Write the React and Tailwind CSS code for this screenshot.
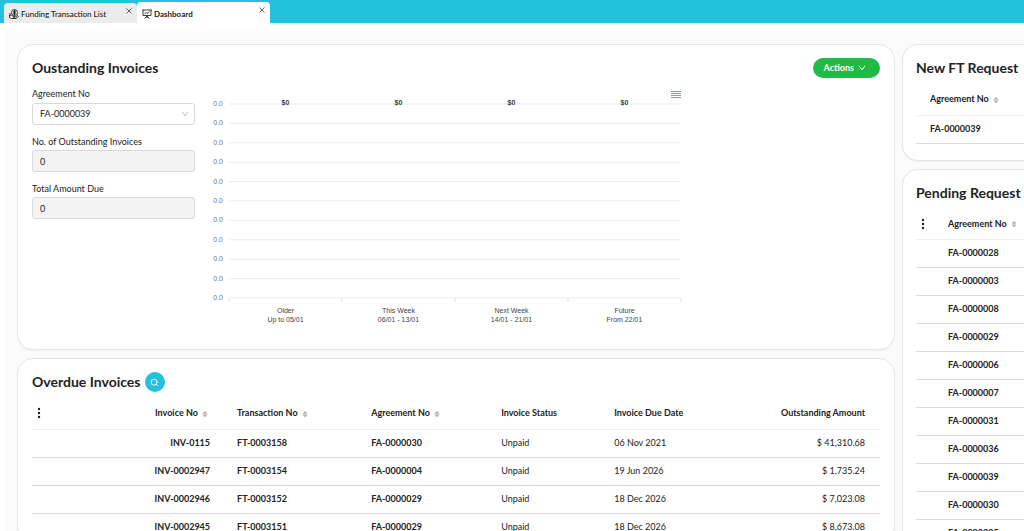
import { Search } from 'lucide-react'
import clsx from 'clsx'

const overdueInvoices = [
  { invoice: 'INV-0115', transaction: 'FT-0003158', agreement: 'FA-0000030', status: 'Unpaid', due: '06 Nov 2021', amount: '$ 41,310.68' },
  { invoice: 'INV-0002947', transaction: 'FT-0003154', agreement: 'FA-0000004', status: 'Unpaid', due: '19 Jun 2026', amount: '$ 1,735.24' },
  { invoice: 'INV-0002946', transaction: 'FT-0003152', agreement: 'FA-0000029', status: 'Unpaid', due: '18 Dec 2026', amount: '$ 7,023.08' },
  { invoice: 'INV-0002945', transaction: 'FT-0003151', agreement: 'FA-0000029', status: 'Unpaid', due: '18 Dec 2026', amount: '$ 8,673.08' },
]

const pendingRequests = [
  'FA-0000028',
  'FA-0000003',
  'FA-0000008',
  'FA-0000029',
  'FA-0000006',
  'FA-0000007',
  'FA-0000031',
  'FA-0000036',
  'FA-0000039',
  'FA-0000030',
  'FA-0000005',
]

const periods = [
  { name: 'Older', range: 'Up to 05/01', value: '$0' },
  { name: 'This Week', range: '06/01 - 13/01', value: '$0' },
  { name: 'Next Week', range: '14/01 - 21/01', value: '$0' },
  { name: 'Future', range: 'From 22/01', value: '$0' },
]

function SortIcon() {
  return (
    <svg className="mx-0.5 inline-block" width="6" height="8" viewBox="0 0 6 8" fill="#b0b0b0">
      <path d="M3 1 5.700 3.800H0.300z" />
      <path d="M3 7.200 0.300 4.400h5.400z" />
    </svg>
  )
}

function Chevron({ className }) {
  return (
    <svg className={className} width="8" height="6" viewBox="0 0 8 6" fill="none" stroke="currentColor">
      <path d="M1 0.800 4 4.800 7 0.800" />
    </svg>
  )
}

function DotsButton() {
  return (
    <button aria-label="Columns" className="block px-1">
      <svg width="6" height="12" viewBox="0 0 6 12" fill="#222">
        <circle cx="3" cy="2" r="1.2" />
        <circle cx="3" cy="6" r="1.2" />
        <circle cx="3" cy="10" r="1.2" />
      </svg>
    </button>
  )
}

function FundingIcon() {
  return (
    <svg width="10" height="10" viewBox="0 0 20 20" fill="none" stroke="#222" strokeWidth="1.8">
      <circle cx="11" cy="7" r="6" />
      <path d="M14 4.500H10a1.200 1.200 0 0 0 0 2.500h2a1.200 1.200 0 0 1 0 2.500H8M11 2v10" />
      <path d="M1 12.500h4l3 2h4v2H8M1 12v5l4 2h9l5-4-2-2-4 3" />
      <path d="M2 8v4" />
    </svg>
  )
}

function DashboardIcon() {
  return (
    <svg width="10" height="10" viewBox="0 0 20 20" fill="none" stroke="#222" strokeWidth="1.7">
      <path d="M0 2h20M2 2v11h16V2M10 13v3M10 15l-5 4M10 15l5 4" />
      <path d="M5 10l3-3 2 2 5-4" />
      <circle cx="10" cy="15.500" r="1.300" />
    </svg>
  )
}

function Tab({ icon, label, active }) {
  return (
    <div
      className={clsx(
        'flex w-[133px] items-start justify-between rounded-t px-1 text-[8px]',
        active ? 'h-[21px] bg-white font-bold' : 'h-5 bg-[#ececec] font-medium'
      )}
    >
      <a href="#" className="flex h-full items-center gap-0.5 pl-px pt-0.5">
        {icon}
        {label}
      </a>
      <button aria-label={'Close ' + label} className="p-px pt-[5px]">
        <svg className="block" width="6" height="6" viewBox="0 0 6 6" stroke="#666">
          <path d="M0.500 0.500 5.500 5.500M5.500 0.500 0.500 5.500" />
        </svg>
      </button>
    </div>
  )
}

function Card({ className, children }) {
  return (
    <section className={clsx('border border-[#e6e6e6] bg-white pt-[13px] shadow-xs', className)}>
      {children}
    </section>
  )
}

function Title({ children }) {
  return <h2 className="whitespace-nowrap text-[14px] font-bold leading-5 text-[#222]">{children}</h2>
}

function ReadOnlyField({ id, label }) {
  return (
    <div className="mt-2">
      <label htmlFor={id} className="block h-4 leading-4">{label}</label>
      <input
        id={id}
        readOnly
        value="0"
        className="block h-[22px] w-full rounded-[3px] border border-[#d9d9d9] bg-[#f4f4f4] px-[7px]"
      />
    </div>
  )
}

function InvoiceChart() {
  const left = 21
  const top = 16
  const step = 19.4
  const colWidth = 113
  const bottom = top + step * 10
  return (
    <svg className="mt-1.5 shrink-0" width="480" height="240" viewBox="0 0 480 240" fontFamily="Liberation Sans, Arial, sans-serif" fontSize="7">
      {Array.from({ length: 11 }, (_, i) => (
        <g key={i}>
          <line x1={left} x2={left + colWidth * 4} y1={top + step * i} y2={top + step * i} stroke="#ebebeb" />
          <text x={left - 6} y={top + step * i + 2} textAnchor="end" fill="#6e7886">0.0</text>
        </g>
      ))}
      {[0, 1, 2, 3, 4].map((i) => (
        <line key={i} x1={left + colWidth * i} x2={left + colWidth * i} y1={bottom} y2={bottom + 4} stroke="#e0e0e0" />
      ))}
      {periods.map((p, i) => (
        <g key={p.name} textAnchor="middle" fill="#444">
          <text x={left + colWidth * (i + 0.5)} y={top + 1} fontWeight="bold" fill="#37404a">{p.value}</text>
          <text x={left + colWidth * (i + 0.5)} y={bottom + 15}>{p.name}</text>
          <text x={left + colWidth * (i + 0.5)} y={bottom + 24}>{p.range}</text>
        </g>
      ))}
      <path d="M463 3.500h10M463 5.500h10M463 7.500h10M463 9.500h10" stroke="#8d9aa6" strokeWidth="1" />
    </svg>
  )
}

const headCell = 'p-0 text-left font-bold whitespace-nowrap'

export default function App() {
  return (
    <div className="flex h-screen flex-col overflow-hidden bg-white font-['Lato','Liberation_Sans',sans-serif] text-[9px] leading-3 text-[#222]">
      <nav className="flex h-[23px] shrink-0 items-end bg-[#22c1dd] pl-1">
        <Tab icon={<FundingIcon />} label="Funding Transaction List" />
        <Tab icon={<DashboardIcon />} label="Dashboard" active />
      </nav>

      <main className="ml-1 mt-2 flex min-h-0 flex-1 gap-[7px] bg-[#fbfbfb] pl-[13px] pt-[13px]">
        <div className="flex min-w-0 flex-1 flex-col gap-2">
          <Card className="h-[306px] shrink-0 rounded-2xl px-3.5">
            <div className="flex items-center justify-between">
              <Title>Oustanding Invoices</Title>
              <button className="flex h-5 items-center gap-1 rounded-full bg-[#21ba45] pl-[11px] pr-3.5 font-bold text-white">
                Actions
                <Chevron />
              </button>
            </div>
            <div className="flex">
              <div className="w-[163px] shrink-0 pt-2">
                <label htmlFor="agreement" className="block h-4 leading-4">Agreement No</label>
                <div className="relative mb-[9px] mt-px">
                  <select id="agreement" className="block h-[22px] w-full appearance-none rounded-[3px] border border-[#d9d9d9] bg-white px-[7px]">
                    <option>FA-0000039</option>
                  </select>
                  <Chevron className="pointer-events-none absolute right-1.5 top-2 text-[#bbb]" />
                </div>
                <ReadOnlyField id="count" label="No. of Outstanding Invoices" />
                <div className="mt-[9px]">
                  <ReadOnlyField id="total" label="Total Amount Due" />
                </div>
              </div>
              <div className="ml-[13px] pt-1">
                <InvoiceChart />
              </div>
            </div>
          </Card>

          <Card className="shrink-0 rounded-2xl px-3.5">
            <div className="flex items-center gap-1">
              <Title>Overdue Invoices</Title>
              <button aria-label="Search" className="flex size-5 items-center justify-center rounded-full bg-[#22c1dd] text-white">
                <Search size={9} strokeWidth={2.5} />
              </button>
            </div>
            <table className="mt-1.5 w-full table-fixed">
              <thead>
                <tr className="h-[31px] border-b border-[#f0f0f0]">
                  <th className={clsx(headCell, 'w-[10%]')}><DotsButton /></th>
                  <th className={clsx(headCell, 'w-[11%] text-right')}>Invoice No <SortIcon /></th>
                  <th className={clsx(headCell, 'w-[19%] pl-[27px]')}>Transaction No <SortIcon /></th>
                  <th className={clsx(headCell, 'w-[130px]')}>Agreement No <SortIcon /></th>
                  <th className={clsx(headCell, 'w-[113px]')}>Invoice Status</th>
                  <th className={clsx(headCell, 'w-[15%]')}>Invoice Due Date</th>
                  <th className={clsx(headCell, 'pr-[15px] text-right')}>Outstanding Amount</th>
                </tr>
              </thead>
              <tbody>
                {overdueInvoices.map((row) => (
                  <tr key={row.invoice} className="h-7 border-b border-[#d5dce6]">
                    <td />
                    <td className="p-0 text-right font-bold">{row.invoice}</td>
                    <td className="p-0 pl-[27px] font-bold">{row.transaction}</td>
                    <td className="p-0 font-bold">{row.agreement}</td>
                    <td className="p-0">{row.status}</td>
                    <td className="p-0">{row.due}</td>
                    <td className="p-0 pr-[15px] text-right">{row.amount}</td>
                  </tr>
                ))}
              </tbody>
            </table>
          </Card>
        </div>

        <div className="flex w-[122px] shrink-0 flex-col gap-2">
          <Card className="h-[117px] shrink-0 rounded-l-2xl border-r-0 pl-[13px]">
            <Title>New FT Request</Title>
            <table className="mt-1.5 w-full">
              <thead>
                <tr className="h-[31px] border-b border-[#f0f0f0]">
                  <th className={clsx(headCell, 'pl-3.5')}>Agreement No <SortIcon /></th>
                </tr>
              </thead>
              <tbody>
                <tr className="h-7 border-b border-[#d5dce6]">
                  <td className="p-0 pl-3.5 font-bold">FA-0000039</td>
                </tr>
              </tbody>
            </table>
          </Card>

          <Card className="shrink-0 rounded-l-2xl border-r-0 pl-[13px]">
            <Title>Pending Request</Title>
            <table className="mt-1.5 w-full">
              <thead>
                <tr className="h-[30px] border-b border-[#f0f0f0]">
                  <th className="w-8 p-0"><DotsButton /></th>
                  <th className={headCell}>Agreement No <SortIcon /></th>
                </tr>
              </thead>
              <tbody>
                {pendingRequests.map((no) => (
                  <tr key={no} className="h-7 border-b border-[#d5dce6]">
                    <td />
                    <td className="p-0 font-bold">{no}</td>
                  </tr>
                ))}
              </tbody>
            </table>
          </Card>
        </div>
      </main>
    </div>
  )
}
